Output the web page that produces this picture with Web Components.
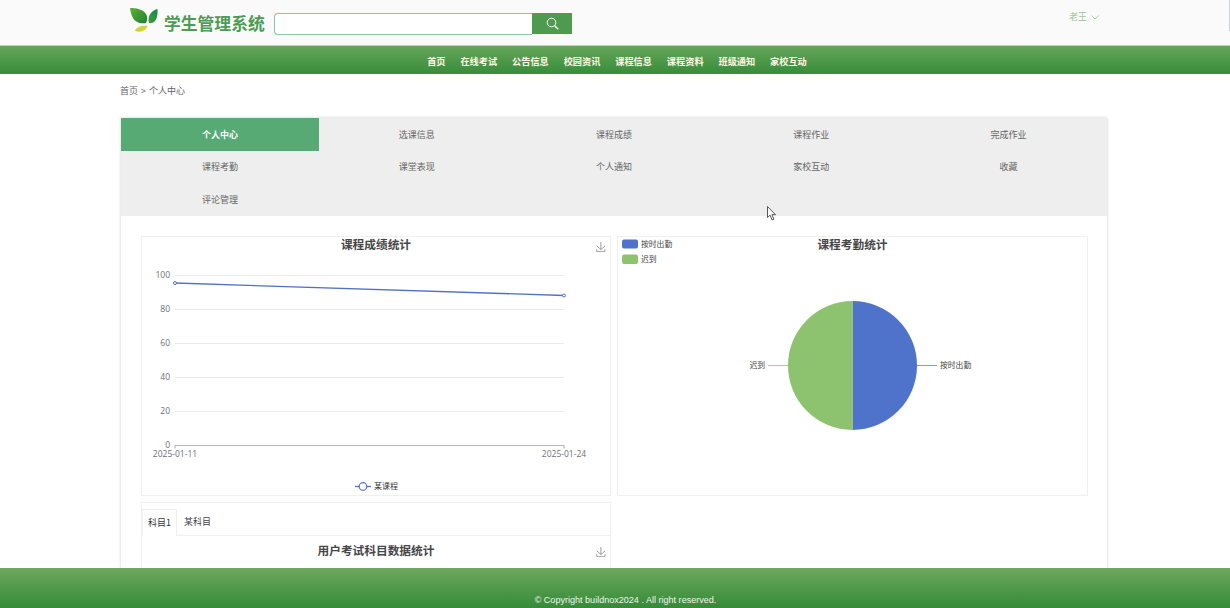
<!DOCTYPE html>
<html lang="zh">
<head>
<meta charset="utf-8">
<title>学生管理系统</title>
<style>
    html, body { margin: 0; height: 100%; overflow: hidden; background: #fff; }
    body { font-family: "Noto Sans CJK SC", "Liberation Sans", sans-serif; color: #666; }
</style>
</head>
<body>
<site-header></site-header>
<site-nav>
    <a>首页</a><a>在线考试</a><a>公告信息</a><a>校园资讯</a><a>课程信息</a><a>课程资料</a><a>班级通知</a><a>家校互动</a>
</site-nav>
<bread-crumb>首页 &gt; 个人中心</bread-crumb>
<center-card>
    <center-tabs slot="tabs" items="个人中心,选课信息,课程成绩,课程作业,完成作业,课程考勤,课堂表现,个人通知,家校互动,收藏,评论管理"></center-tabs>
    <score-chart></score-chart>
    <attendance-chart></attendance-chart>
    <exam-panel></exam-panel>
</center-card>
<site-footer></site-footer>
<mouse-cursor></mouse-cursor>

<script>
// download icon used by the chart toolbox
const downloadIcon = `<svg style="display:block" width="10" height="10" viewBox="0 0 60 60" fill="none" stroke="#8a8a8a" stroke-width="5">
    <path d="M4.700 22.900L29.300 45.500L54.700 23.400M4.600 43.600V58H53.800V43.600M29.200 45.100V0"/></svg>`;

class SiteHeader extends HTMLElement {
    constructor() {
        super();
        this.attachShadow({mode: 'open'});
        this.shadowRoot.innerHTML = `
        <style>
            :host { display: flex; position: relative; align-items: flex-start; height: 45px; background: #fafafa; box-sizing: border-box; padding-left: 130px; }
            .logo { display: block; margin-top: 7px; }
            .name { margin: 11px 0 0 5px; width: 101px; font-size: 16.800px; line-height: 24px; font-weight: 700; color: #4f9a55; white-space: nowrap; }
            .search { display: flex; margin: 13px 0 0 9px; height: 22px; }
            .search i { display: block; box-sizing: border-box; width: 258px; height: 22px; background: #fff; border: 1px solid #8fc59c; border-right: 0; border-radius: 4px 0 0 4px; }
            .search b { display: flex; align-items: center; justify-content: center; width: 40px; height: 21px; background: #4e9a4f; }
            .user { display: flex; align-items: center; gap: 4px; margin: 10px 0 0 497px; font-size: 9px; line-height: 14px; color: #9cc392; }
            .edge { position: absolute; right: 0; top: 0; width: 1px; height: 31px; background: #c6cffa; }
        </style>
        <svg class="logo" width="29" height="26" viewBox="0 0 29 26">
            <defs>
                <linearGradient id="lf" x1="0" y1="0" x2="1" y2="1"><stop offset="0" stop-color="#5fb233"/><stop offset="1" stop-color="#1d7f34"/></linearGradient>
                <linearGradient id="rf" x1="1" y1="0" x2="0" y2="1"><stop offset="0" stop-color="#168a4c"/><stop offset="1" stop-color="#3f9c3c"/></linearGradient>
            </defs>
            <path d="M0 1c6 0 13 1 16 6 2 3 1 7 0 9-6 1-11-1-13-5C1 8 .5 4 0 1z" fill="url(#lf)"/>
            <path d="M27.500 2c.3 5-.3 10-3 12.500-1.500 1.300-3.500 2-5.500 1.500-1-3.500-.5-7 2-10 1.500-2 4-3.500 6.500-4z" fill="url(#rf)"/>
            <path d="M5 24c1-3.500 5-5.500 12.500-5.200C16.500 23 12 26 5 24z" fill="#cfd43a"/>
        </svg>
        <div class="name">学生管理系统</div>
        <div class="search"><i></i><b>
            <svg width="13" height="13" viewBox="0 0 13 13" fill="none" stroke="#fff" stroke-width="1"><circle cx="5.500" cy="5.500" r="4.300"/><path d="M8.700 8.700l3.500 3.500" stroke-width="1.500"/></svg>
        </b></div>
        <div class="user">老王
            <svg width="8" height="5" viewBox="0 0 8 5" fill="none" stroke="#9cc392" stroke-width=".8"><path d="M.5 .5L4 4 7.500 .5"/></svg>
        </div>
        <div class="edge"></div>`;
    }
}

class SiteNav extends HTMLElement {
    constructor() {
        super();
        this.attachShadow({mode: 'open'});
        this.shadowRoot.innerHTML = `
        <style>
            :host { display: flex; justify-content: center; align-items: center; gap: 14.860px; height: 29px; padding: 2px 0 0 4px; box-sizing: border-box;
                background: linear-gradient(#66a65b, #378c3a); border-top: 1px solid #b9d3b3; font-size: 9.200px; font-weight: 700; color: #fdf8e4; }
            ::slotted(a) { display: block; white-space: nowrap; }
        </style>
        <slot></slot>`;
    }
}

class BreadCrumb extends HTMLElement {
    constructor() {
        super();
        this.attachShadow({mode: 'open'});
        this.shadowRoot.innerHTML = `
        <style>
            :host { display: block; height: 44px; padding: 10px 0 0 120px; box-sizing: border-box; font-size: 9px; line-height: 14px; color: #666; word-spacing: 1px; }
        </style>
        <slot></slot>`;
    }
}

class CenterCard extends HTMLElement {
    constructor() {
        super();
        this.attachShadow({mode: 'open'});
        this.shadowRoot.innerHTML = `
        <style>
            :host { display: block; width: 986px; margin-left: 121px; background: #fff; box-shadow: 0 0 3px rgba(0,0,0,.2); }
            .body { display: grid; grid-template-columns: 470px 471px; column-gap: 6px; row-gap: 6px; padding: 20px 20px 10px; }
        </style>
        <slot name="tabs"></slot>
        <div class="body"><slot></slot></div>`;
    }
}

class CenterTabs extends HTMLElement {
    constructor() {
        super();
        this.attachShadow({mode: 'open'});
        const items = this.getAttribute('items').split(',');
        this.shadowRoot.innerHTML = `
        <style>
            :host { display: grid; grid-template-columns: repeat(5, 1fr); grid-auto-rows: 32.500px; background: #eee; font-size: 9px; color: #666; }
            div { display: flex; align-items: center; justify-content: center; }
            div:nth-child(5n+2) { padding-left: 1px; }
            .on { background: #58aa75; color: #fff; font-weight: 700; margin-right: -1px; padding-right: 1px; }
        </style>
        ${items.map((t, i) => `<div class="${i === 0 ? 'on' : ''}">${t}</div>`).join('')}`;
    }
}

class ScoreChart extends HTMLElement {
    constructor() {
        super();
        this.attachShadow({mode: 'open'});
        const grid = [[100, 275], [80, 309], [60, 343], [40, 377], [20, 411]];
        // chart coords: panel origin is at 141,236 on the page
        this.shadowRoot.innerHTML = `
        <style>
            :host { display: block; position: relative; height: 260px; box-sizing: border-box; border: 1px solid #f0f0f0; }
            svg.plot { display: block; position: absolute; left: -1px; top: -1px; }
            text { font-family: "Open Sans", "Noto Sans CJK SC", sans-serif; font-size: 8.500px; fill: #6e7079; }
            .t { font-family: "Noto Sans CJK SC", sans-serif; font-size: 11.700px; font-weight: 700; fill: #464646; }
            .l { font-family: "Noto Sans CJK SC", sans-serif; font-size: 8px; fill: #333; }
            .dl { position: absolute; right: 4px; top: 5px; }
        </style>
        <svg class="plot" width="470" height="260" viewBox="0 0 470 260">
            <text class="t" x="235" y="13" text-anchor="middle">课程成绩统计</text>
            ${grid.map(([v, y]) => `<path d="M34 ${y - 236}.5H423" stroke="#e9ebf0" stroke-width="1"/><text x="29" y="${y - 233}" text-anchor="end">${v}</text>`).join('')}
            <text x="29" y="212" text-anchor="end">0</text>
            <path d="M34 209.500H423" stroke="#b4b7bd" stroke-width="1.200"/>
            <path d="M34 209.500v3M423 209.500v3" stroke="#8a8d94" stroke-width=".8"/>
            <text x="34" y="221" text-anchor="middle">2025-01-11</text>
            <text x="423" y="221" text-anchor="middle">2025-01-24</text>
            <path d="M34 47L423 59.500" fill="none" stroke="#5470c6" stroke-width="1.300"/>
            <circle cx="34" cy="47" r="1.500" fill="#fff" stroke="#5470c6"/>
            <circle cx="423" cy="59.500" r="1.500" fill="#fff" stroke="#5470c6"/>
            <path d="M214 250.500H230" stroke="#5470c6" stroke-width="1.300"/>
            <circle cx="222" cy="250.500" r="3.800" fill="#fff" stroke="#5470c6" stroke-width="1.200"/>
            <text class="l" x="233" y="253">某课程</text>
        </svg>
        <div class="dl">${downloadIcon}</div>`;
    }
}

class AttendanceChart extends HTMLElement {
    constructor() {
        super();
        this.attachShadow({mode: 'open'});
        this.shadowRoot.innerHTML = `
        <style>
            :host { display: block; position: relative; height: 260px; box-sizing: border-box; border: 1px solid #f0f0f0; }
            svg { display: block; position: absolute; left: -1px; top: -1px; }
            text { font-family: "Noto Sans CJK SC", sans-serif; font-size: 7.800px; fill: #444; }
            .t { font-size: 11.700px; font-weight: 700; fill: #464646; }
        </style>
        <svg width="471" height="260" viewBox="0 0 471 260">
            <rect x="5" y="3.500" width="16" height="9" rx="2" fill="#4f72cb"/>
            <text x="24" y="11">按时出勤</text>
            <rect x="5" y="18.500" width="16" height="9.500" rx="2" fill="#8dc26f"/>
            <text x="24" y="26">迟到</text>
            <text class="t" x="235.500" y="13" text-anchor="middle">课程考勤统计</text>
            <path d="M235.500 65a64.500 64.500 0 0 1 0 129z" fill="#4f72cb"/>
            <path d="M235.500 65a64.500 64.500 0 0 0 0 129z" fill="#8dc26f"/>
            <rect x="300" y="129" width="20" height="1" fill="#7f97dc"/>
            <rect x="151" y="129" width="20" height="1" fill="#a8d190"/>
            <text x="323" y="132">按时出勤</text>
            <text x="148" y="132" text-anchor="end">迟到</text>
        </svg>`;
    }
}

class ExamPanel extends HTMLElement {
    constructor() {
        super();
        this.attachShadow({mode: 'open'});
        this.shadowRoot.innerHTML = `
        <style>
            :host { display: block; position: relative; height: 80px; box-sizing: border-box; border: 1px solid #f0f0f0; }
            .tabs { display: flex; height: 26px; margin-top: 6px; border-bottom: 1px solid #f0f0f0; font-size: 9px; color: #444; }
            .tabs span { display: flex; align-items: center; padding: 0 7px; }
            .tabs .on { border: 1px solid #f0f0f0; border-width: 1px 1px 0 1px; padding: 0 5px; background: #fff; height: 27px; box-sizing: border-box; color: #333; }
            h3 { margin: 6px 0 0; font-size: 11.700px; line-height: 16px; font-weight: 700; color: #464646; text-align: center; }
            .dl { position: absolute; right: 4px; top: 44px; }
        </style>
        <div class="tabs"><span class="on">科目1</span><span>某科目</span></div>
        <h3>用户考试科目数据统计</h3>
        <div class="dl">${downloadIcon}</div>`;
    }
}

class SiteFooter extends HTMLElement {
    constructor() {
        super();
        this.attachShadow({mode: 'open'});
        this.shadowRoot.innerHTML = `
        <style>
            :host { display: block; position: fixed; left: 0; right: 0; bottom: 0; height: 40px; box-sizing: border-box; padding-top: 26px;
                background: linear-gradient(#6ea85e, #348b38); font: 9.050px/13px "Liberation Sans", sans-serif; color: #f2f2f2; text-align: center; padding-left: 21px; }
        </style>
        © Copyright buildnox2024 . All right reserved.`;
    }
}

// the mouse pointer caught in the screenshot
class MouseCursor extends HTMLElement {
    constructor() {
        super();
        this.attachShadow({mode: 'open'});
        this.shadowRoot.innerHTML = `
        <style>:host { display: block; position: fixed; left: 767px; top: 203px; width: 10px; height: 16px; }</style>
        <svg width="10" height="16" viewBox="0 0 10 16"><path d="M.5 .5v11l2.600-2.300 2 4.800 1.800-.8-2-4.500H8.500z" fill="#fff" stroke="#444" stroke-width=".9"/></svg>`;
    }
}

customElements.define('site-header', SiteHeader);
customElements.define('site-nav', SiteNav);
customElements.define('bread-crumb', BreadCrumb);
customElements.define('center-card', CenterCard);
customElements.define('center-tabs', CenterTabs);
customElements.define('score-chart', ScoreChart);
customElements.define('attendance-chart', AttendanceChart);
customElements.define('exam-panel', ExamPanel);
customElements.define('site-footer', SiteFooter);
customElements.define('mouse-cursor', MouseCursor);
</script>
</body>
</html>
